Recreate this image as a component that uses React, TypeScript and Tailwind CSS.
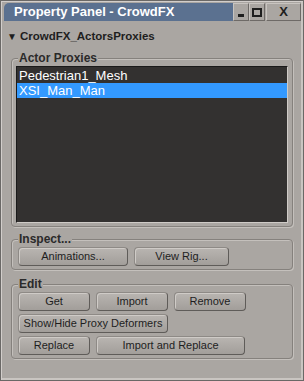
const btn =
  "h-[19px] whitespace-nowrap rounded-[4px] border border-[#8e8a86] border-b-[#5f5c59] border-r-[#5f5c59] bg-gradient-to-b from-[#b9b5b1] to-[#a29e9a] shadow-[inset_1px_1px_0_#cfcbc7] text-[11px] text-[#1e1e1e] leading-none flex items-center justify-center";

function Group({ title, children, className = "" }: { title: string; children: React.ReactNode; className?: string }) {
  return (
    <div className={`relative mx-[10px] rounded-[4px] border border-[#85817d] shadow-[1px_1px_0_#c4c0bc,inset_1px_1px_0_#c4c0bc] ${className}`}>
      <div className="absolute -top-[9px] left-[6px] bg-[#aaa6a2] px-[1px] text-[12px] font-bold leading-[16px] text-[#2a2a2a]">
        {title}
      </div>
      {children}
    </div>
  );
}

export default function App() {
  return (
    <div
      className="flex h-[381px] w-[304px] flex-col border border-[#6a6866] bg-[#aaa6a2] shadow-[inset_1px_1px_0_#d2cecb,inset_-2px_-2px_0_#c9c5c1]"
      style={{ fontFamily: '"Liberation Sans", Arial, sans-serif' }}
    >
      {/* title bar */}
      <div className="ml-[3px] mr-[2px] mt-[2px] flex h-[18px]">
        <div className="flex flex-1 items-center rounded-tl-[5px] bg-[#5b7190] pl-[10px] text-[13px] font-bold text-white">
          Property Panel - CrowdFX
        </div>
        <div className="flex h-[18px] w-[16px] items-end justify-center border border-[#c8c4c0] border-b-[#6e6a67] border-r-[#6e6a67] bg-[#aaa6a2] pb-[3px]">
          <div className="h-[3px] w-[6px] bg-[#1e1e1e]" />
        </div>
        <div className="flex h-[18px] w-[16px] items-center justify-center border border-[#c8c4c0] border-b-[#6e6a67] border-r-[#6e6a67] bg-[#aaa6a2]">
          <div className="h-[9px] w-[10px] border-2 border-[#1e1e1e]" />
        </div>
        <div className="ml-[1px] flex h-[18px] w-[35px] items-center justify-center border border-[#c8c4c0] border-b-[#6e6a67] border-r-[#6e6a67] bg-[#aaa6a2] text-[13px] font-bold text-[#1e1e1e]">
          X
        </div>
      </div>

      {/* header */}
      <div className="mt-[7px] flex items-center pl-[6px] text-[11.5px] font-bold text-[#1e1e1e]">
        <span className="mr-[3px] text-[10px]">▼</span>
        CrowdFX_ActorsProxies
      </div>

      <Group title="Actor Proxies" className="mt-[13px] h-[169px] px-[4px] pt-[7px]">
        <div className="h-[157px] border border-[#1a1a1a] border-b-[#cfcbc7] border-r-[#cfcbc7] bg-[#333130] text-[13px] text-white">
          <div className="mt-[1px] pl-[2px] leading-[15px]">Pedestrian1_Mesh</div>
          <div className="bg-[#3399ff] pl-[2px] leading-[15px]">XSI_Man_Man</div>
        </div>
      </Group>

      <Group title="Inspect..." className="mt-[12px] h-[31px] px-[6px] pt-[7px]">
        <div className="flex gap-[6px]">
          <button className={`${btn} w-[110px]`}>Animations...</button>
          <button className={`${btn} w-[95px]`}>View Rig...</button>
        </div>
      </Group>

      <Group title="Edit" className="mt-[14px] h-[75px] px-[6px] pt-[7px]">
        <div className="flex flex-col gap-[3px]">
          <div className="flex gap-[6px]">
            <button className={`${btn} w-[72px]`}>Get</button>
            <button className={`${btn} w-[72px]`}>Import</button>
            <button className={`${btn} w-[72px]`}>Remove</button>
          </div>
          <div className="flex">
            <button className={`${btn} w-[150px]`}>Show/Hide Proxy Deformers</button>
          </div>
          <div className="flex gap-[6px]">
            <button className={`${btn} w-[72px]`}>Replace</button>
            <button className={`${btn} w-[149px]`}>Import and Replace</button>
          </div>
        </div>
      </Group>
    </div>
  );
}
